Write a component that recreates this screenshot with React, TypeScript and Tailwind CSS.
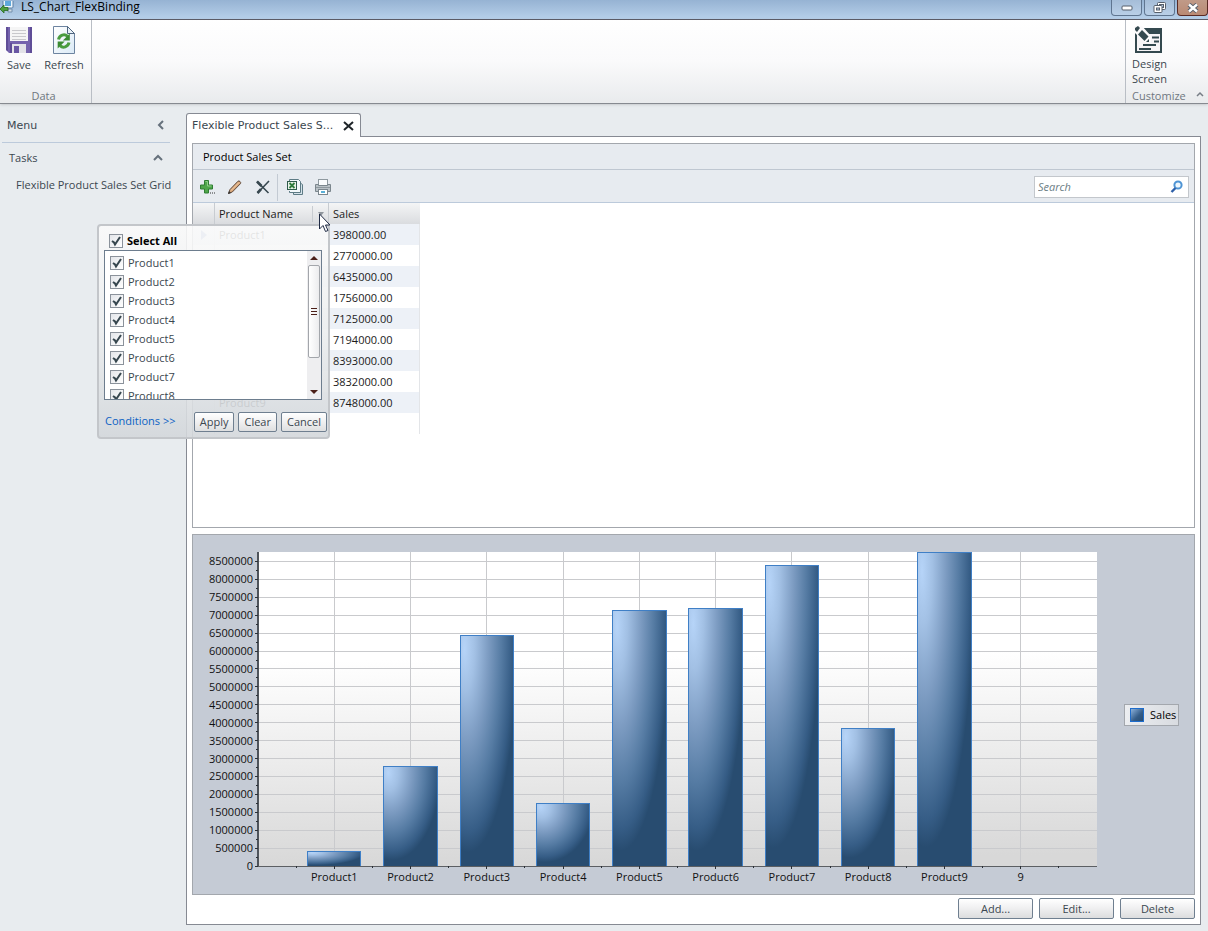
import type { ReactNode } from 'react'
import { useState } from 'react'

interface Sale {
  name: string
  value: number
}

const SALES: Sale[] = [
  { name: 'Product1', value: 398000 },
  { name: 'Product2', value: 2770000 },
  { name: 'Product3', value: 6435000 },
  { name: 'Product4', value: 1756000 },
  { name: 'Product5', value: 7125000 },
  { name: 'Product6', value: 7194000 },
  { name: 'Product7', value: 8393000 },
  { name: 'Product8', value: 3832000 },
  { name: 'Product9', value: 8748000 }
]

const Y_MAX = 8765000
const Y_STEP = 500000
const X_SLOTS = 11
const VISIBLE_FILTER_ROWS = 8

function AppIcon() {
  return (
    <svg width="14" height="13" viewBox="0 0 14 13">
      <rect x="3" y="-2" width="10" height="9" rx="1" fill="#eef5fb" stroke="#5b7fa6" />
      <rect x="5" y="0" width="6" height="5" fill="#5fa8dc" />
      <path d="M8 8h4v3H8z" fill="#cfdbe6" stroke="#7490ad" />
      <path d="M0 8l4-4v2.500h4v3H4V12z" fill="#4fa03f" stroke="#2a6a25" strokeWidth=".8" />
    </svg>
  )
}

function SaveIcon() {
  return (
    <svg width="26" height="26" viewBox="0 0 26 26">
      <path d="M0 0h26v26H3l-3-3z" fill="#7563ad" />
      <path d="M0 0h2v24l-2-1zM24 0h2v26h-2z" fill="#5f4d97" />
      <rect x="4" y="0" width="18" height="14" fill="#f5f5f5" />
      <path d="M6 3.500h14M6 6.500h14M6 9.500h14M6 12.500h14" stroke="#c9c9cc" />
      <rect x="6" y="17" width="14" height="9" fill="#e3e3e8" />
      <rect x="8" y="19" width="5" height="7" fill="#6a57a4" />
      <path d="M4 26V16h2v10z" fill="#5f4d97" />
    </svg>
  )
}

function RefreshIcon() {
  return (
    <svg width="24" height="30" viewBox="0 0 24 30">
      <defs>
        <linearGradient id="page" x1="0" y1="0" x2="1" y2="1">
          <stop offset="0" stopColor="#fff" />
          <stop offset="1" stopColor="#dbeaf6" />
        </linearGradient>
      </defs>
      <path d="M1.500 1.500h14l7 7v20h-21z" fill="url(#page)" stroke="#6d84a0" />
      <path d="M15.500 1.500v7h7z" fill="#e9f1f8" stroke="#4f6680" />
      <path d="M6.500 14.500c1-4.500 6-6 9-3.200" fill="none" stroke="#4a9c3f" strokeWidth="3" />
      <path d="M17.800 8.500v7h-7z" fill="#3b8b33" />
      <path d="M17 17.500c-1 4.500-6 6-9 3.200" fill="none" stroke="#4a9c3f" strokeWidth="3" />
      <path d="M5.700 23.500v-7h7z" fill="#3b8b33" />
    </svg>
  )
}

function DesignIcon() {
  return (
    <svg width="30" height="28" viewBox="0 0 30 28">
      <rect x="2" y="3" width="25" height="23" fill="#f6f4f6" stroke="#34494f" strokeWidth="2" />
      <rect x="1" y="2" width="27" height="6" fill="#34494f" />
      <path d="M18 11.500h7M20 15.500h5M9 19h13M5 23h12" stroke="#34494f" strokeWidth="2" />
      <path d="M0 0h8l9 10v7l-7-1L0 6z" fill="#fbfafb" />
      <path d="M1 2l3-2 2 2-3 4-2-2z" fill="#34494f" />
      <path d="M8 4l6.500 6.500-4 4.500L4 8.500z" fill="#34494f" />
      <path d="M15 13v3h-3z" fill="#34494f" />
    </svg>
  )
}

function AddIcon() {
  return (
    <svg width="16" height="16" viewBox="0 0 16 16">
      <path d="M5.500 1.500h4v4.500h4v4h-4v4h-4v-4h-4V6h4z" fill="#4fa64a" stroke="#2f7d33" />
      <path d="M6.500 2.500h2V7h4" fill="none" stroke="#8ccf86" />
      <path d="M11 14h1M13 14h1M15 14h1" stroke="#333" />
    </svg>
  )
}

function EditIcon() {
  return (
    <svg width="16" height="16" viewBox="0 0 16 16">
      <path d="M1.500 14.500l1.500-4L11 2.200c1-1 3.500 1 2.500 2.400L5.300 13z" fill="#d9a679" stroke="#5f4a3c" />
      <path d="M4 11.500l8-8" stroke="#f3cfaa" />
      <path d="M1 15l1-3 2 2z" fill="#333" />
    </svg>
  )
}

function DeleteIcon() {
  return (
    <svg width="16" height="16" viewBox="0 0 16 16">
      <path d="M2 2.500l11.500 11.500M14 2L2.500 14" stroke="#37474f" strokeWidth="1.600" fill="none" />
      <path d="M2 2.500l4.500 4.500M2.500 14l3.500-3.800" stroke="#37474f" strokeWidth="2.600" fill="none" />
    </svg>
  )
}

function ExcelIcon() {
  return (
    <svg width="18" height="16" viewBox="0 0 18 16">
      <path d="M7.500 3.500h6l3 2v10h-9z" fill="#d5e2ea" stroke="#5d7b85" />
      <path d="M3.500 2V.5h9l2 2v11h-11V12" fill="#f3f8fb" stroke="#5d7b85" />
      <rect x="1.500" y="2.500" width="9" height="8" fill="#e9f3e8" stroke="#2f5b4c" />
      <path d="M3.500 4l5 5M8.500 4l-5 5" stroke="#2f7b3c" strokeWidth="1.800" />
    </svg>
  )
}

function PrintIcon() {
  return (
    <svg width="18" height="16" viewBox="0 0 18 16">
      <rect x="4.500" y=".5" width="9" height="6" fill="#fafcfd" stroke="#8f999f" />
      <path d="M1.500 5.500h3v1h9v-1h3v7h-15z" fill="#b9c1c6" stroke="#7b868d" />
      <path d="M2 8.500h14" stroke="#8f999f" />
      <rect x="4.500" y="10.500" width="9" height="5" fill="#fff" stroke="#7b868d" />
      <path d="M7 13h4" stroke="#5ab0d8" strokeWidth="2" />
    </svg>
  )
}

function SearchIcon() {
  return (
    <svg width="14" height="14" viewBox="0 0 14 14">
      <circle cx="8" cy="5" r="3.600" fill="#eef7fd" stroke="#4e94d4" strokeWidth="2" />
      <path d="M5.500 8L1.500 12" stroke="#2d5fa8" strokeWidth="2.400" />
    </svg>
  )
}

function Chevron({ d, label }: { d: string; label: string }) {
  return (
    <button aria-label={label} className="flex">
      <svg width="10" height="10" viewBox="0 0 10 10">
        <path d={d} fill="none" stroke="#66717c" strokeWidth="2" />
      </svg>
    </button>
  )
}

function TitleBar() {
  const frame = 'h-4 w-[31px] flex items-center justify-center rounded-b-sm border border-t-0'
  return (
    <header className="flex h-[19px] items-start justify-between bg-linear-to-b from-[#96b3d3] to-[#b7d0ea]">
      <div className="flex h-[14px] items-center gap-[7px] text-[12px] leading-[14px] text-black">
        <AppIcon />
        <h1>LS_Chart_FlexBinding</h1>
      </div>
      <div className="flex gap-0.5">
        <button aria-label="Minimize" className={`${frame} border-[#5f7590] bg-linear-to-b from-[#a5bdd8] to-[#b9cfe7]`}>
          <svg width="12" height="6" viewBox="0 0 12 6">
            <rect x="1" y="1" width="10" height="4" rx="1" fill="#fff" stroke="#565f6b" />
          </svg>
        </button>
        <button aria-label="Restore" className={`${frame} border-[#5f7590] bg-linear-to-b from-[#a5bdd8] to-[#b9cfe7]`}>
          <svg width="13" height="12" viewBox="0 0 13 12">
            <rect x="4.500" y=".5" width="8" height="7" rx="1" fill="#fff" stroke="#565f6b" />
            <rect x="6.500" y="2.500" width="4" height="3" fill="#b4cae2" stroke="#565f6b" />
            <rect x="1" y="3.500" width="8" height="7" rx="1" fill="#fff" stroke="#565f6b" />
            <rect x="3.500" y="6" width="3" height="2" fill="#b4cae2" stroke="#565f6b" />
          </svg>
        </button>
        <button aria-label="Close" className={`${frame} border-[#5a2a24] bg-linear-to-b from-[#c09a88] to-[#b98a74]`}>
          <svg width="12" height="10" viewBox="0 0 12 10">
            <path d="M2 1.500l8 7M10 1.500l-8 7" stroke="#565f6b" strokeWidth="4.400" />
            <path d="M2 1.500l8 7M10 1.500l-8 7" stroke="#fff" strokeWidth="2.400" />
          </svg>
        </button>
      </div>
    </header>
  )
}

function Ribbon() {
  return (
    <div className="flex h-[85px] justify-between border-t border-b border-t-[#5b5b66] border-b-[#868a90] bg-linear-to-b from-white via-[#fafafb] to-[#e9ebed] shadow-sm">
      <div className="flex w-[92px] flex-col border-r border-[#b9bec5]">
        <div className="flex flex-1 gap-2 pl-1.5 pt-[5px]">
          <button className="flex w-[26px] flex-col items-center gap-1 self-start pt-0.5">
            <SaveIcon />
            <span className="leading-[15px]">Save</span>
          </button>
          <button className="flex w-12 flex-col items-center gap-0.5 self-start">
            <RefreshIcon />
            <span className="leading-[15px]">Refresh</span>
          </button>
        </div>
        <div className="h-[15px] pr-1 text-center leading-[15px] text-[#6f7780]">Data</div>
      </div>
      <div className="flex w-[83px] flex-col border-l border-[#b9bec5] pl-1.5">
        <button className="flex flex-col items-start self-start pt-1.5">
          <span className="pl-0.5">
            <DesignIcon />
          </span>
          <span className="mt-0.5 text-left leading-[15px]">
            Design
            <br />
            Screen
          </span>
        </button>
        <div className="mt-auto flex h-[15px] items-center justify-between pr-1 leading-[15px] text-[#6f7780]">
          Customize
          <button aria-label="Collapse ribbon" className="pb-1">
            <svg width="8" height="6" viewBox="0 0 8 6">
              <path d="M1 5l3-3 3 3" fill="none" stroke="#777e86" strokeWidth="1.500" />
            </svg>
          </button>
        </div>
      </div>
    </div>
  )
}

function Sidebar() {
  return (
    <nav className="w-[186px] shrink-0 pt-[11px]">
      <div className="ml-0.5 mr-4 flex h-7 items-start justify-between border-b border-[#bccadb] pl-[5px] pr-1 pt-[3px] font-['DejaVu_Sans',sans-serif]">
        <span className="leading-4">Menu</span>
        <span className="pt-0.5">
          <Chevron d="M7 1L3 5l4 4" label="Collapse menu" />
        </span>
      </div>
      <div className="flex items-center justify-between pl-[9px] pr-[23px] pt-[7px]">
        <span className="leading-4">Tasks</span>
        <Chevron d="M1 7l4-4 4 4" label="Collapse tasks" />
      </div>
      <a href="#grid" className="mt-[11px] block whitespace-nowrap pl-4 leading-4">
        Flexible Product Sales Set Grid
      </a>
    </nav>
  )
}

function ToolButton({ label, children }: { label: string; children: ReactNode }) {
  return (
    <button aria-label={label} className="flex h-5 w-7 items-center justify-center">
      {children}
    </button>
  )
}

function Check({ label, bold }: { label: string; bold?: boolean }) {
  return (
    <label className={`flex h-[19px] items-start gap-1 ${bold ? 'font-bold text-black' : ''}`}>
      <span className="grid pt-[3px]">
        <input
          type="checkbox"
          defaultChecked
          className="peer col-start-1 row-start-1 size-[14px] appearance-none border border-[#8b929b] bg-linear-to-br from-[#e4e6ea] to-white"
        />
        <svg
          className="pointer-events-none invisible col-start-1 row-start-1 peer-checked:visible"
          width="14"
          height="14"
          viewBox="0 0 14 14"
        >
          <path d="M3 7l2 1.500L6 10.500 11 3" fill="none" stroke="#37474f" strokeWidth="2" />
        </svg>
      </span>
      <span className="leading-5">{label}</span>
    </label>
  )
}

const popupButton =
  'h-5 rounded-[2px] border border-[#6f7f90] bg-linear-to-b from-white via-[#f0f0f1] via-50% to-[#dedfe0] px-[5px] leading-[18px]'

function FilterPopup() {
  return (
    <div className="absolute right-[-2px] top-full z-10 flex h-[215px] w-[233px] flex-col rounded-[4px] border-2 border-[#c3c6ca] bg-linear-to-b from-[#fafafa]/90 via-[#eceeef]/90 to-[#d3d7db]/90 px-[5px] pt-[5px] text-[#3b474f] font-normal">
      <div className="pl-[5px]">
        <Check label="Select All" bold />
      </div>
      <div className="flex h-[150px] w-[218px] border border-[#6d7d8e] bg-white">
        <div className="h-full flex-1 overflow-hidden pl-[5px] pt-0.5">
          {SALES.slice(0, VISIBLE_FILTER_ROWS).map((s) => (
            <Check key={s.name} label={s.name} />
          ))}
        </div>
        <div className="flex w-[14px] flex-col items-center bg-[#eeeef0]">
          <button aria-label="Scroll up" className="flex h-[14px] items-center">
            <svg width="8" height="4" viewBox="0 0 8 4">
              <path d="M0 4l4-4 4 4z" fill="#4b1f18" />
            </svg>
          </button>
          <div className="flex h-[93px] w-3 flex-col items-center justify-center gap-0.5 rounded-[2px] border border-[#a3a6ab] bg-linear-to-r from-white to-[#ececee]">
            <i className="h-px w-1.5 bg-[#4b1f18]" />
            <i className="h-px w-1.5 bg-[#4b1f18]" />
            <i className="h-px w-1.5 bg-[#4b1f18]" />
          </div>
          <button aria-label="Scroll down" className="mt-auto flex h-[14px] items-center">
            <svg width="8" height="4" viewBox="0 0 8 4">
              <path d="M0 0l4 4 4-4z" fill="#4b1f18" />
            </svg>
          </button>
        </div>
      </div>
      <div className="-mr-1 flex flex-1 items-center gap-1 pt-1.5">
        <a href="#conditions" className="mr-auto whitespace-nowrap pl-px text-[#0c62c4]">
          Conditions &gt;&gt;
        </a>
        <button className={popupButton}>Apply</button>
        <button className={popupButton}>Clear</button>
        <button className={popupButton}>Cancel</button>
      </div>
    </div>
  )
}

function SalesTable() {
  return (
    <table className="w-[227px] table-fixed border-separate border-spacing-0 text-left text-[#1b1b1b]">
      <colgroup>
        <col className="w-[22px]" />
        <col className="w-[114px]" />
        <col className="w-[91px]" />
      </colgroup>
      <thead>
        <tr className="h-[21px] bg-linear-to-b from-[#f4f5f6] to-[#dadcdf]">
          <th className="border-r border-[#c8ccd1] p-0" aria-label="Row" />
          <th className="relative border-r border-[#c8ccd1] p-0 pl-1 font-normal">
            <div className="flex h-[21px] items-center justify-between pt-px">
              Product Name
              <button aria-label="Filter" className="flex h-4 w-4 items-center justify-center border-l border-[#c8ccd1]">
                <svg width="6" height="4" viewBox="0 0 6 4">
                  <path d="M0 0h6L3 4z" fill="#8f959c" />
                </svg>
              </button>
            </div>
            <FilterPopup />
            <svg className="absolute right-[-3px] top-2.5 z-20" width="13" height="20" viewBox="0 0 13 20">
              <path d="M1.500 1v15L5 12.500 7.500 18.500l2.500-1L7.500 12H12z" fill="#fff" stroke="#1f2a44" />
            </svg>
          </th>
          <th className="p-0 pl-1 pt-px font-normal">Sales</th>
        </tr>
      </thead>
      <tbody>
        {SALES.map((s, i) => (
          <tr key={s.name} className="h-[21px] odd:bg-[#edf1f7]">
            <td className="border-r border-[#e3e5e8] p-0 pl-2">
              {i === 0 && (
                <svg width="6" height="10" viewBox="0 0 6 10">
                  <path d="M0 0l6 5-6 5z" fill="#8095c8" />
                </svg>
              )}
            </td>
            <td className="p-0 pl-1 leading-4">{s.name}</td>
            <td className="border-r border-[#e3e5e8] p-0 pl-1 leading-4">{s.value.toFixed(2)}</td>
          </tr>
        ))}
        <tr className="h-[21px]">
          <td className="border-r border-[#e3e5e8] p-0" />
          <td className="p-0" />
          <td className="border-r border-[#e3e5e8] p-0" />
        </tr>
      </tbody>
    </table>
  )
}

function GridPanel() {
  const [search, setSearch] = useState('')
  return (
    <section className="shrink-0 grow basis-[385px] border border-[#a3a7ad]">
      <h2 className="flex h-[26px] items-center border-b border-[#bfc7d1] bg-[#e7ebf0] pl-2.5 pt-px text-black">
        Product Sales Set
      </h2>
      <div className="flex h-[33px] items-center border-b border-[#bccadb] bg-[#e7ebf0] pr-[5px] pt-0.5">
        <ToolButton label="Add">
          <AddIcon />
        </ToolButton>
        <ToolButton label="Edit">
          <EditIcon />
        </ToolButton>
        <ToolButton label="Delete">
          <DeleteIcon />
        </ToolButton>
        <div className="mr-[3px] h-[27px] w-px bg-[#c3cad3]" />
        <ToolButton label="Export to Excel">
          <ExcelIcon />
        </ToolButton>
        <ToolButton label="Print">
          <PrintIcon />
        </ToolButton>
        <div className="ml-auto flex h-[22px] w-[155px] items-center border border-[#c3c7cc] bg-white pl-[3px] pr-1">
          <input
            aria-label="Search"
            value={search}
            onChange={(e) => setSearch(e.target.value)}
            placeholder="Search"
            className="min-w-0 flex-1 outline-none placeholder:italic placeholder:text-[#6b7d84]"
          />
          <SearchIcon />
        </div>
      </div>
      <SalesTable />
    </section>
  )
}

// everything is placed in percent of the plot, so the chart follows its panel
function SalesChart() {
  const y = (v: number) => 100 - (v / Y_MAX) * 100
  const x = (slot: number) => (slot / X_SLOTS) * 100
  const majors = Array.from({ length: 18 }, (_, i) => i * Y_STEP)
  const minors = majors.slice(0, 17).map((v) => v + Y_STEP / 2)
  const barWidth = x(0.7)
  return (
    <svg className="min-w-0 flex-1 overflow-visible" role="img" aria-label="Sales by product">
      <defs>
        <linearGradient id="plot" x1="0" y1="0" x2=".04" y2="1">
          <stop offset=".35" stopColor="#ffffff" />
          <stop offset="1" stopColor="#d8d8d8" />
        </linearGradient>
        <radialGradient id="bar" cx=".15" cy=".02" r=".92" fx=".08" fy=".06">
          <stop offset="0" stopColor="#b6d4f8" />
          <stop offset=".2" stopColor="#a2c0e4" />
          <stop offset=".45" stopColor="#7d9cc2" />
          <stop offset=".7" stopColor="#557ba3" />
          <stop offset=".9" stopColor="#365d86" />
          <stop offset="1" stopColor="#284c70" />
        </radialGradient>
      </defs>
      <rect width="100%" height="100%" fill="url(#plot)" />
      <g shapeRendering="crispEdges">
        {majors.slice(1).map((v) => (
          <line key={v} x1="0" x2="100%" y1={`${y(v)}%`} y2={`${y(v)}%`} stroke="#c9cacd" />
        ))}
        {Array.from({ length: 10 }, (_, i) => (
          <line key={i} x1={`${x(i + 1)}%`} x2={`${x(i + 1)}%`} y1="0" y2="100%" stroke="#c9cacd" />
        ))}
        {SALES.map((s, i) => (
          <rect
            key={s.name}
            x={`${x(i + 1) - barWidth / 2}%`}
            y={`${y(s.value)}%`}
            width={`${barWidth}%`}
            height={`${100 - y(s.value)}%`}
            fill="url(#bar)"
            stroke="#3f7fc6"
          />
        ))}
        <line x1="0" x2="0" y1="0" y2="100%" stroke="#4f545b" strokeWidth="2" />
        <line x1="0" x2="100%" y1="100%" y2="100%" stroke="#5c5f63" />
        {majors.map((v) => (
          <line key={v} x1="-3" x2="0" y1={`${y(v)}%`} y2={`${y(v)}%`} stroke="#2b3036" />
        ))}
        {minors.map((v) => (
          <line key={v} x1="-2" x2="0" y1={`${y(v)}%`} y2={`${y(v)}%`} stroke="#2b3036" />
        ))}
        {Array.from({ length: 21 }, (_, i) => (
          <svg key={i} y="100%" className="overflow-visible">
            <line x1={`${x((i + 1) / 2)}%`} x2={`${x((i + 1) / 2)}%`} y1="0" y2={i % 2 ? 3 : 2} stroke="#2b3036" />
          </svg>
        ))}
      </g>
      <g fill="#111">
        {majors.map((v) => (
          <text key={v} x="-5" y={`${y(v)}%`} dy="4" textAnchor="end">
            {v}
          </text>
        ))}
        {[...SALES.map((s) => s.name), '9'].map((name, i) => (
          <text key={name} x={`${x(i + 1)}%`} y="100%" dy="15" textAnchor="middle">
            {name}
          </text>
        ))}
      </g>
    </svg>
  )
}

function ChartPanel() {
  return (
    <section className="flex shrink-0 grow basis-[361px] border border-[#a3a7ad] bg-[#c5cbd5] pb-7 pl-[65px] pr-[15px] pt-[17px]">
      <SalesChart />
      <div className="ml-[27px] mt-3 flex h-[22px] w-[55px] items-center gap-1.5 self-center border border-[#a3a7ad] bg-linear-to-r from-[#eceef1] to-[#d8dbe0] pl-[5px] text-black">
        <i className="size-[14px] border border-[#1d6ccc] bg-linear-to-br from-[#8db3dd] via-[#345c87] via-60% to-[#284c70]" />
        Sales
      </div>
    </section>
  )
}

const actionButton =
  'h-[21px] w-[75px] rounded-[2px] border border-[#6f7f90] bg-linear-to-b from-white via-[#efeff0] via-50% to-[#dcddde] leading-[18px]'

export default function App() {
  return (
    <div className="flex min-h-screen flex-col bg-[#e8ecef] font-['Open_Sans',sans-serif] text-[11px] text-[#3b474f]">
      <TitleBar />
      <Ribbon />
      <div className="flex flex-1">
        <Sidebar />
        <main className="flex min-w-0 flex-1 flex-col pb-1.5 pr-[7px] pt-[9px]">
          <div className="z-1 -mb-px flex h-6 w-[175px] items-center justify-between rounded-t-[3px] border border-b-0 border-[#868a93] bg-white pl-[5px] pr-1.5 font-['DejaVu_Sans',sans-serif]">
            <span className="whitespace-nowrap pt-0.5">Flexible Product Sales S...</span>
            <button aria-label="Close tab">
              <svg width="11" height="10" viewBox="0 0 11 10">
                <path d="M1 1l9 8M10 1L1 9" stroke="#1e2429" strokeWidth="2" />
              </svg>
            </button>
          </div>
          <div className="flex flex-1 flex-col border border-[#868a93] bg-white px-[5px] pb-[5px] pt-1.5">
            <GridPanel />
            <div className="h-1.5 shrink-0" />
            <ChartPanel />
            <div className="flex justify-end gap-1.5 pt-[3px]">
              <button className={actionButton}>Add...</button>
              <button className={actionButton}>Edit...</button>
              <button className={actionButton}>Delete</button>
            </div>
          </div>
        </main>
      </div>
    </div>
  )
}
